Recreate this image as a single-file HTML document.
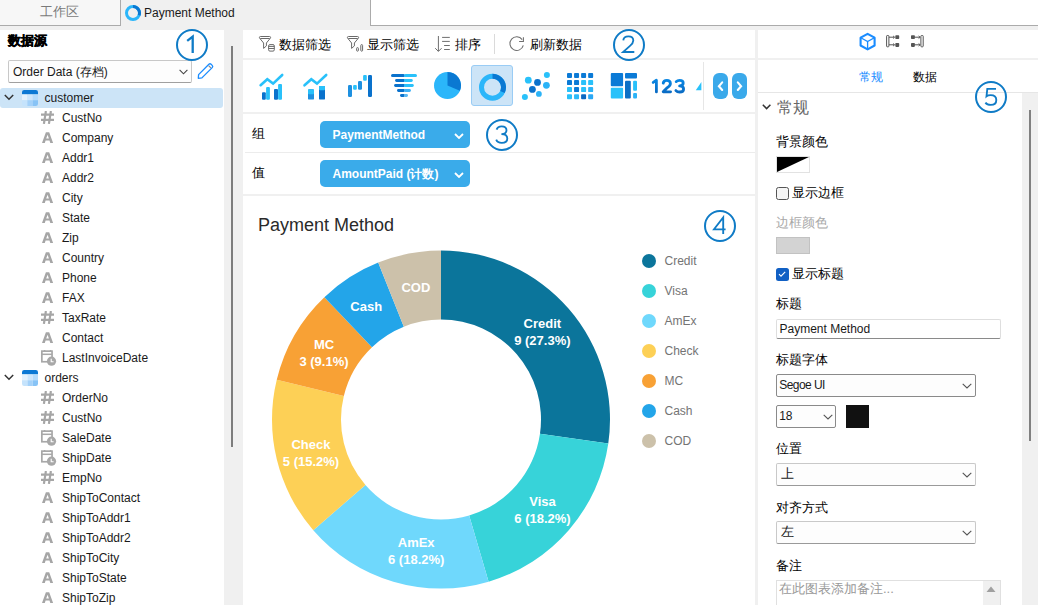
<!DOCTYPE html>
<html><head><meta charset="utf-8">
<style>
*{margin:0;padding:0;box-sizing:border-box}
html,body{width:1038px;height:605px;overflow:hidden;background:#f0f0f0;font-family:"Liberation Sans",sans-serif;color:#1a1a1a}
.abs{position:absolute}
.tt{position:absolute;font-size:12px;line-height:20px;height:20px;white-space:nowrap;color:#1a1a1a}
.ic{display:block}
.anno{position:absolute;width:32px;height:32px;border:1.8px solid #0f7bc6;border-radius:50%;color:#0f7bc6;font-size:22px;line-height:29px;text-align:center;z-index:10;font-family:"Liberation Sans",sans-serif}
.tb{position:absolute;font-size:13px;line-height:21px;white-space:nowrap;color:#000}
.nav{position:absolute;top:73px;width:15px;height:25.5px;background:#3aa9ea;border-radius:6px}
.pill{position:absolute;left:320px;width:150px;height:27px;background:#3aabea;border-radius:5px;color:#fff;font-weight:bold;font-size:12px;line-height:27px;padding-left:12.5px;padding-top:0.7px;white-space:nowrap}
.pill svg{position:absolute;left:133.5px;top:11.8px}
.dl{position:absolute;width:80px;text-align:center;color:#fff;font-weight:bold;font-size:13px;line-height:17px;white-space:nowrap}
.lg{position:absolute;font-size:12px;line-height:20px;color:#747474;white-space:nowrap}
.rl{position:absolute;left:776px;font-size:13px;line-height:18px;white-space:nowrap;color:#000}
.sel{position:absolute;left:776px;background:#fdfdfd;border:1px solid #c9c9c9;border-bottom-color:#9a9a9a;border-radius:2px;font-size:12px;white-space:nowrap;padding-left:3.5px}
.sel svg{position:absolute}
</style></head><body>
<!-- tab bar -->
<div class="abs" style="left:0;top:0;width:121px;height:26px;background:#f7f7f7;border-right:1px solid #ababab;border-bottom:1px solid #ababab"></div>
<div class="abs" style="left:40px;top:3px;font-size:13px;line-height:18px;color:#7a7a7a">工作区</div>
<svg class="abs" style="left:125px;top:5px" width="16" height="16" viewBox="0 0 16 16"><circle cx="8" cy="8" r="6.5" fill="none" stroke="#2bb6fa" stroke-width="3"/><path d="M8 0A8 8 0 0 1 15.52 10.74L12.7 9.71A5 5 0 0 0 8 3Z" fill="#0a78d2"/></svg>
<div class="abs" style="left:144px;top:3px;font-size:12px;line-height:20px;color:#1a1a1a">Payment Method</div>
<div class="abs" style="left:370px;top:0;width:668px;height:26px;background:#fff;border-left:1px solid #ababab;border-bottom:1px solid #ababab"></div>

<!-- left panel -->
<div class="abs" style="left:0;top:30px;width:224px;height:575px;background:#fff"></div>
<div class="abs" style="left:8px;top:32px;font-size:13px;font-weight:bold;line-height:18px;color:#000;-webkit-text-stroke:0.45px #000">数据源</div>
<div class="abs" style="left:8px;top:60px;width:183.5px;height:22.5px;background:#fdfdfd;border:1px solid #c8c8c8;border-bottom-color:#a0a0a0;border-radius:2px"></div>
<div class="abs" style="left:13px;top:62px;font-size:12px;line-height:20px;white-space:nowrap">Order Data (存档)</div>
<svg class="abs" style="left:178.5px;top:69px" width="9" height="6" viewBox="0 0 9 6"><path d="M0.6 0.8L4.5 4.8L8.4 0.8" stroke="#444" stroke-width="1.1" fill="none"/></svg>
<svg class="abs" style="left:196px;top:62px" width="19" height="19" viewBox="0 0 19 19"><path d="M2.6 12.6L12.9 2.3Q14 1.2 15.1 2.3L16.2 3.4Q17.3 4.5 16.2 5.6L5.9 15.9L2.3 16.3Z" stroke="#1a8cff" stroke-width="1.3" fill="none" stroke-linejoin="round"/><path d="M12.6 3.6L14.9 5.9" stroke="#888" stroke-width="1.2"/></svg>
<div style="position:absolute;left:0;top:88px;width:223px;height:20px;background:#cce4f7;border-radius:3px"></div>
<svg style="position:absolute;left:4px;top:94px" width="10" height="7" viewBox="0 0 10 7"><path d="M0.8 1L5 5.2L9.2 1" stroke="#333" stroke-width="1.5" fill="none"/></svg>
<div style="position:absolute;left:22px;top:90px;width:16px;height:16px"><svg width="16" height="16" viewBox="0 0 16 16"><defs><clipPath id="tc"><rect x="0" y="0" width="16" height="16" rx="2.2"/></clipPath></defs><g clip-path="url(#tc)"><rect x="0" y="0" width="16" height="4.4" fill="#0c78d4"/><rect x="0" y="4.4" width="5.4" height="5.8" fill="#e4f2fe"/><rect x="5.4" y="4.4" width="5.3" height="5.8" fill="#cde6fc"/><rect x="10.7" y="4.4" width="5.3" height="5.8" fill="#b5dbfb"/><rect x="0" y="10.2" width="5.4" height="5.8" fill="#c5e3fc"/><rect x="5.4" y="10.2" width="5.3" height="5.8" fill="#a3d1f9"/><rect x="10.7" y="10.2" width="5.3" height="5.8" fill="#87c3f6"/></g></svg></div>
<div class="tt" style="left:44.5px;top:88px">customer</div>
<div style="position:absolute;left:41px;top:111px"><svg class="ic" width="14" height="14" viewBox="0 0 14 14"><path d="M4.9 0L2.9 12.9M9.9 0L7.9 12.9M0 3.6H13M0 8.9H13" stroke="#a6a6a6" stroke-width="2.2" fill="none"/></svg></div>
<div class="tt" style="left:62px;top:108px">CustNo</div>
<div style="position:absolute;left:41px;top:131px"><svg class="ic" width="14" height="14" viewBox="0 0 14 14"><path fill-rule="evenodd" d="M1 12L4.9 1.2H8.2L12.1 12H9.3L8.5 9.6H4.6L3.8 12ZM5.2 7.6H7.9L6.55 3.8Z" fill="#a6a6a6"/></svg></div>
<div class="tt" style="left:62px;top:128px">Company</div>
<div style="position:absolute;left:41px;top:151px"><svg class="ic" width="14" height="14" viewBox="0 0 14 14"><path fill-rule="evenodd" d="M1 12L4.9 1.2H8.2L12.1 12H9.3L8.5 9.6H4.6L3.8 12ZM5.2 7.6H7.9L6.55 3.8Z" fill="#a6a6a6"/></svg></div>
<div class="tt" style="left:62px;top:148px">Addr1</div>
<div style="position:absolute;left:41px;top:171px"><svg class="ic" width="14" height="14" viewBox="0 0 14 14"><path fill-rule="evenodd" d="M1 12L4.9 1.2H8.2L12.1 12H9.3L8.5 9.6H4.6L3.8 12ZM5.2 7.6H7.9L6.55 3.8Z" fill="#a6a6a6"/></svg></div>
<div class="tt" style="left:62px;top:168px">Addr2</div>
<div style="position:absolute;left:41px;top:191px"><svg class="ic" width="14" height="14" viewBox="0 0 14 14"><path fill-rule="evenodd" d="M1 12L4.9 1.2H8.2L12.1 12H9.3L8.5 9.6H4.6L3.8 12ZM5.2 7.6H7.9L6.55 3.8Z" fill="#a6a6a6"/></svg></div>
<div class="tt" style="left:62px;top:188px">City</div>
<div style="position:absolute;left:41px;top:211px"><svg class="ic" width="14" height="14" viewBox="0 0 14 14"><path fill-rule="evenodd" d="M1 12L4.9 1.2H8.2L12.1 12H9.3L8.5 9.6H4.6L3.8 12ZM5.2 7.6H7.9L6.55 3.8Z" fill="#a6a6a6"/></svg></div>
<div class="tt" style="left:62px;top:208px">State</div>
<div style="position:absolute;left:41px;top:231px"><svg class="ic" width="14" height="14" viewBox="0 0 14 14"><path fill-rule="evenodd" d="M1 12L4.9 1.2H8.2L12.1 12H9.3L8.5 9.6H4.6L3.8 12ZM5.2 7.6H7.9L6.55 3.8Z" fill="#a6a6a6"/></svg></div>
<div class="tt" style="left:62px;top:228px">Zip</div>
<div style="position:absolute;left:41px;top:251px"><svg class="ic" width="14" height="14" viewBox="0 0 14 14"><path fill-rule="evenodd" d="M1 12L4.9 1.2H8.2L12.1 12H9.3L8.5 9.6H4.6L3.8 12ZM5.2 7.6H7.9L6.55 3.8Z" fill="#a6a6a6"/></svg></div>
<div class="tt" style="left:62px;top:248px">Country</div>
<div style="position:absolute;left:41px;top:271px"><svg class="ic" width="14" height="14" viewBox="0 0 14 14"><path fill-rule="evenodd" d="M1 12L4.9 1.2H8.2L12.1 12H9.3L8.5 9.6H4.6L3.8 12ZM5.2 7.6H7.9L6.55 3.8Z" fill="#a6a6a6"/></svg></div>
<div class="tt" style="left:62px;top:268px">Phone</div>
<div style="position:absolute;left:41px;top:291px"><svg class="ic" width="14" height="14" viewBox="0 0 14 14"><path fill-rule="evenodd" d="M1 12L4.9 1.2H8.2L12.1 12H9.3L8.5 9.6H4.6L3.8 12ZM5.2 7.6H7.9L6.55 3.8Z" fill="#a6a6a6"/></svg></div>
<div class="tt" style="left:62px;top:288px">FAX</div>
<div style="position:absolute;left:41px;top:311px"><svg class="ic" width="14" height="14" viewBox="0 0 14 14"><path d="M4.9 0L2.9 12.9M9.9 0L7.9 12.9M0 3.6H13M0 8.9H13" stroke="#a6a6a6" stroke-width="2.2" fill="none"/></svg></div>
<div class="tt" style="left:62px;top:308px">TaxRate</div>
<div style="position:absolute;left:41px;top:331px"><svg class="ic" width="14" height="14" viewBox="0 0 14 14"><path fill-rule="evenodd" d="M1 12L4.9 1.2H8.2L12.1 12H9.3L8.5 9.6H4.6L3.8 12ZM5.2 7.6H7.9L6.55 3.8Z" fill="#a6a6a6"/></svg></div>
<div class="tt" style="left:62px;top:328px">Contact</div>
<div style="position:absolute;left:41px;top:350px"><svg class="ic" width="16" height="16" viewBox="0 0 16 16"><rect x="0.85" y="1.15" width="10.2" height="10.6" stroke="#a8a8a8" stroke-width="1.7" fill="none"/><path d="M0.85 4.3H11" stroke="#a8a8a8" stroke-width="1.5"/><path d="M3.6 0V1.5M9.6 0V1.5" stroke="#a8a8a8" stroke-width="1.5"/><circle cx="10.5" cy="11.2" r="4.6" fill="#a8a8a8"/><path d="M10.2 8.7V11.7H12.6" stroke="#fff" stroke-width="1.1" fill="none"/></svg></div>
<div class="tt" style="left:62px;top:348px">LastInvoiceDate</div>
<svg style="position:absolute;left:4px;top:374px" width="10" height="7" viewBox="0 0 10 7"><path d="M0.8 1L5 5.2L9.2 1" stroke="#333" stroke-width="1.5" fill="none"/></svg>
<div style="position:absolute;left:22px;top:370px;width:16px;height:16px"><svg width="16" height="16" viewBox="0 0 16 16"><defs><clipPath id="tc"><rect x="0" y="0" width="16" height="16" rx="2.2"/></clipPath></defs><g clip-path="url(#tc)"><rect x="0" y="0" width="16" height="4.4" fill="#0c78d4"/><rect x="0" y="4.4" width="5.4" height="5.8" fill="#e4f2fe"/><rect x="5.4" y="4.4" width="5.3" height="5.8" fill="#cde6fc"/><rect x="10.7" y="4.4" width="5.3" height="5.8" fill="#b5dbfb"/><rect x="0" y="10.2" width="5.4" height="5.8" fill="#c5e3fc"/><rect x="5.4" y="10.2" width="5.3" height="5.8" fill="#a3d1f9"/><rect x="10.7" y="10.2" width="5.3" height="5.8" fill="#87c3f6"/></g></svg></div>
<div class="tt" style="left:44.5px;top:368px">orders</div>
<div style="position:absolute;left:41px;top:391px"><svg class="ic" width="14" height="14" viewBox="0 0 14 14"><path d="M4.9 0L2.9 12.9M9.9 0L7.9 12.9M0 3.6H13M0 8.9H13" stroke="#a6a6a6" stroke-width="2.2" fill="none"/></svg></div>
<div class="tt" style="left:62px;top:388px">OrderNo</div>
<div style="position:absolute;left:41px;top:411px"><svg class="ic" width="14" height="14" viewBox="0 0 14 14"><path d="M4.9 0L2.9 12.9M9.9 0L7.9 12.9M0 3.6H13M0 8.9H13" stroke="#a6a6a6" stroke-width="2.2" fill="none"/></svg></div>
<div class="tt" style="left:62px;top:408px">CustNo</div>
<div style="position:absolute;left:41px;top:430px"><svg class="ic" width="16" height="16" viewBox="0 0 16 16"><rect x="0.85" y="1.15" width="10.2" height="10.6" stroke="#a8a8a8" stroke-width="1.7" fill="none"/><path d="M0.85 4.3H11" stroke="#a8a8a8" stroke-width="1.5"/><path d="M3.6 0V1.5M9.6 0V1.5" stroke="#a8a8a8" stroke-width="1.5"/><circle cx="10.5" cy="11.2" r="4.6" fill="#a8a8a8"/><path d="M10.2 8.7V11.7H12.6" stroke="#fff" stroke-width="1.1" fill="none"/></svg></div>
<div class="tt" style="left:62px;top:428px">SaleDate</div>
<div style="position:absolute;left:41px;top:450px"><svg class="ic" width="16" height="16" viewBox="0 0 16 16"><rect x="0.85" y="1.15" width="10.2" height="10.6" stroke="#a8a8a8" stroke-width="1.7" fill="none"/><path d="M0.85 4.3H11" stroke="#a8a8a8" stroke-width="1.5"/><path d="M3.6 0V1.5M9.6 0V1.5" stroke="#a8a8a8" stroke-width="1.5"/><circle cx="10.5" cy="11.2" r="4.6" fill="#a8a8a8"/><path d="M10.2 8.7V11.7H12.6" stroke="#fff" stroke-width="1.1" fill="none"/></svg></div>
<div class="tt" style="left:62px;top:448px">ShipDate</div>
<div style="position:absolute;left:41px;top:471px"><svg class="ic" width="14" height="14" viewBox="0 0 14 14"><path d="M4.9 0L2.9 12.9M9.9 0L7.9 12.9M0 3.6H13M0 8.9H13" stroke="#a6a6a6" stroke-width="2.2" fill="none"/></svg></div>
<div class="tt" style="left:62px;top:468px">EmpNo</div>
<div style="position:absolute;left:41px;top:491px"><svg class="ic" width="14" height="14" viewBox="0 0 14 14"><path fill-rule="evenodd" d="M1 12L4.9 1.2H8.2L12.1 12H9.3L8.5 9.6H4.6L3.8 12ZM5.2 7.6H7.9L6.55 3.8Z" fill="#a6a6a6"/></svg></div>
<div class="tt" style="left:62px;top:488px">ShipToContact</div>
<div style="position:absolute;left:41px;top:511px"><svg class="ic" width="14" height="14" viewBox="0 0 14 14"><path fill-rule="evenodd" d="M1 12L4.9 1.2H8.2L12.1 12H9.3L8.5 9.6H4.6L3.8 12ZM5.2 7.6H7.9L6.55 3.8Z" fill="#a6a6a6"/></svg></div>
<div class="tt" style="left:62px;top:508px">ShipToAddr1</div>
<div style="position:absolute;left:41px;top:531px"><svg class="ic" width="14" height="14" viewBox="0 0 14 14"><path fill-rule="evenodd" d="M1 12L4.9 1.2H8.2L12.1 12H9.3L8.5 9.6H4.6L3.8 12ZM5.2 7.6H7.9L6.55 3.8Z" fill="#a6a6a6"/></svg></div>
<div class="tt" style="left:62px;top:528px">ShipToAddr2</div>
<div style="position:absolute;left:41px;top:551px"><svg class="ic" width="14" height="14" viewBox="0 0 14 14"><path fill-rule="evenodd" d="M1 12L4.9 1.2H8.2L12.1 12H9.3L8.5 9.6H4.6L3.8 12ZM5.2 7.6H7.9L6.55 3.8Z" fill="#a6a6a6"/></svg></div>
<div class="tt" style="left:62px;top:548px">ShipToCity</div>
<div style="position:absolute;left:41px;top:571px"><svg class="ic" width="14" height="14" viewBox="0 0 14 14"><path fill-rule="evenodd" d="M1 12L4.9 1.2H8.2L12.1 12H9.3L8.5 9.6H4.6L3.8 12ZM5.2 7.6H7.9L6.55 3.8Z" fill="#a6a6a6"/></svg></div>
<div class="tt" style="left:62px;top:568px">ShipToState</div>
<div style="position:absolute;left:41px;top:591px"><svg class="ic" width="14" height="14" viewBox="0 0 14 14"><path fill-rule="evenodd" d="M1 12L4.9 1.2H8.2L12.1 12H9.3L8.5 9.6H4.6L3.8 12ZM5.2 7.6H7.9L6.55 3.8Z" fill="#a6a6a6"/></svg></div>
<div class="tt" style="left:62px;top:588px">ShipToZip</div>
<div class="abs" style="left:231px;top:46px;width:2px;height:401px;background:#7d7d7d"></div>

<!-- middle panel -->
<div class="abs" style="left:243px;top:30px;width:512px;height:27.5px;background:#fff"></div>
<svg class="abs" style="left:255px;top:32px" width="25" height="24" viewBox="0 0 25 24"><path d="M5.4 4.5H14.6A1 1 0 0 1 14.6 6.5H5.4A1 1 0 0 1 5.4 4.5Z" stroke="#6a6a6a" stroke-width="1" fill="none"/><path d="M5 6.6L8.6 11V16.4L11.4 13.9V11L15 6.6" stroke="#6a6a6a" stroke-width="1" fill="none" stroke-linejoin="round"/><rect x="13.6" y="12.6" width="5.7" height="6.5" rx="1.3" stroke="#6a6a6a" stroke-width="1" fill="#fff"/><path d="M13.6 14.4H19.3M13.6 16.5H19.3" stroke="#6a6a6a" stroke-width="1"/></svg>
<div class="tb" style="left:278.5px;top:34px">数据筛选</div>
<svg class="abs" style="left:343px;top:32px" width="25" height="24" viewBox="0 0 25 24"><path d="M5.4 4.5H14.6A1 1 0 0 1 14.6 6.5H5.4A1 1 0 0 1 5.4 4.5Z" stroke="#6a6a6a" stroke-width="1" fill="none"/><path d="M5 6.6L8.6 11V16.4L11.4 13.9V11L15 6.6" stroke="#6a6a6a" stroke-width="1" fill="none" stroke-linejoin="round"/><rect x="13.6" y="15.6" width="1.8" height="3.6" rx="0.9" stroke="#6a6a6a" stroke-width="1" fill="none"/><rect x="17.8" y="12.6" width="1.8" height="6.6" rx="0.9" stroke="#6a6a6a" stroke-width="1" fill="none"/></svg>
<div class="tb" style="left:366.5px;top:34px">显示筛选</div>
<svg class="abs" style="left:430px;top:32px" width="25" height="24" viewBox="0 0 25 24"><path d="M8.4 4V19.2M5.2 16.2L8.4 19.4L11.6 16.2" stroke="#6e6e6e" stroke-width="1" fill="none"/><path d="M12.1 5.4H19.8M12.1 9.4H19.8M14.1 13.5H19.8M14.1 17.5H19.8" stroke="#6e6e6e" stroke-width="1"/></svg>
<div class="tb" style="left:454.5px;top:34px">排序</div>
<div class="abs" style="left:494px;top:34px;width:1px;height:20px;background:#dadada"></div>
<svg class="abs" style="left:505px;top:32px" width="25" height="24" viewBox="0 0 25 24"><path d="M17.2 7.6A6.8 6.8 0 1 0 18.3 13.4" stroke="#6e6e6e" stroke-width="1.05" fill="none"/><path d="M18.4 5.2V9.4H14.1" stroke="#6e6e6e" stroke-width="1.05" fill="none"/></svg>
<div class="tb" style="left:529.5px;top:34px">刷新数据</div>

<div class="abs" style="left:243px;top:60px;width:512px;height:52px;background:#fff"></div>

<svg style="position:absolute;left:255px;top:68px" width="32" height="36" viewBox="255 68 32 36">
<polyline points="260.6,85.2 267.3,79.2 273.1,83.6 282.2,75" stroke="#29c1fa" stroke-width="2.6" fill="none" stroke-linecap="round" stroke-linejoin="miter"/>
<rect x="262" y="92.2" width="3.8" height="7.5" rx="1" fill="#0a72cc"/>
<rect x="266.1" y="87" width="3.8" height="12.7" rx="1" fill="#29c1fa"/>
<rect x="274" y="89.1" width="4" height="10.6" rx="1" fill="#0a72cc"/>
<rect x="278.1" y="84" width="3.9" height="15.7" rx="1" fill="#29c1fa"/>
</svg>
<svg style="position:absolute;left:300px;top:68px" width="32" height="36" viewBox="300 68 32 36">
<polyline points="304.5,85.3 311.3,79.2 317,83.6 326.2,75" stroke="#29c1fa" stroke-width="2.6" fill="none" stroke-linecap="round"/>
<rect x="308" y="89.2" width="6" height="10.4" rx="1.2" fill="#1e90e0"/>
<rect x="308" y="89.2" width="6" height="5" rx="1" fill="#29c1fa"/>
<rect x="319" y="86.1" width="6" height="13.5" rx="1.2" fill="#0a72cc"/>
<rect x="319" y="86.1" width="6" height="4.1" rx="1" fill="#29c1fa"/>
</svg>
<svg style="position:absolute;left:345px;top:68px" width="30" height="34" viewBox="345 68 30 34">
<rect x="348" y="85" width="4" height="12" rx="1.2" fill="#1e90e0"/>
<rect x="353.1" y="85.1" width="3.7" height="4.7" rx="1" fill="#29c1fa"/>
<rect x="358" y="81.1" width="4" height="8.7" rx="1.2" fill="#1e90e0"/>
<rect x="363.1" y="75.1" width="3.7" height="5.6" rx="1" fill="#29c1fa"/>
<rect x="368" y="75.1" width="4" height="21.8" rx="1.2" fill="#0a72cc"/>
</svg>
<svg style="position:absolute;left:388px;top:68px" width="32" height="34" viewBox="388 68 32 34">
<rect x="391" y="74" width="14" height="3" rx="1.5" fill="#0a72cc"/><rect x="404" y="74" width="13" height="3" rx="1.5" fill="#29c1fa"/>
<rect x="395.1" y="79.1" width="10" height="2.9" rx="1.4" fill="#0a72cc"/><rect x="404" y="79.1" width="8.8" height="2.9" rx="1.4" fill="#29c1fa"/>
<rect x="394.1" y="84" width="11" height="2.9" rx="1.4" fill="#0a72cc"/><rect x="404" y="84" width="9.8" height="2.9" rx="1.4" fill="#29c1fa"/>
<rect x="397" y="89" width="8" height="2.9" rx="1.4" fill="#0a72cc"/><rect x="404" y="89" width="6.9" height="2.9" rx="1.4" fill="#3bb0f5"/>
<rect x="400" y="94" width="5" height="2.9" rx="1.4" fill="#0a72cc"/><rect x="404" y="94" width="4" height="2.9" rx="1.4" fill="#5ab9f3"/>
</svg>
<svg style="position:absolute;left:430px;top:68px" width="36" height="36" viewBox="430 68 36 36">
<circle cx="447.5" cy="85.5" r="13.5" fill="#2bb6fa"/>
<path d="M447.5,85.5 L447.5,72 A13.5,13.5 0 0 1 459.9,90.8 Z" fill="#0a78d2"/>
</svg>
<div style="position:absolute;left:471px;top:65px;width:42px;height:41px;background:#cce4f7;border:1px solid #99ccf5;border-radius:3px"></div>
<svg style="position:absolute;left:476px;top:70px" width="34" height="34" viewBox="476 70 34 34">
<circle cx="492.5" cy="87.3" r="11" fill="none" stroke="#2bb6fa" stroke-width="5"/>
<path d="M492.5,73.8 A13.5,13.5 0 0 1 504.7,93.1 L500.2,91 A8.5,8.5 0 0 0 492.5,78.8 Z" fill="#0a78d2"/>
</svg>
<svg style="position:absolute;left:518px;top:68px" width="36" height="36" viewBox="518 68 36 36">
<circle cx="528.3" cy="80.2" r="3.4" fill="#29c1fa"/>
<circle cx="537.5" cy="82.4" r="3.4" fill="#0a72cc"/>
<circle cx="546.9" cy="74.9" r="3" fill="#29c1fa"/>
<circle cx="546.4" cy="85.3" r="3.4" fill="#2bb3f7"/>
<circle cx="532.4" cy="89.4" r="3.4" fill="#0a72cc"/>
<circle cx="538.9" cy="93.9" r="2.9" fill="#2bb3f7"/>
<circle cx="524.9" cy="96.9" r="3" fill="#29c1fa"/>
</svg>
<svg style="position:absolute;left:564px;top:70px" width="32" height="32" viewBox="564 70 32 32"><rect x="567.00" y="73.00" width="5" height="5" rx="0.9" fill="#0b7ad6"/><rect x="574.05" y="73.00" width="5" height="5" rx="0.9" fill="#0b7ad6"/><rect x="581.10" y="73.00" width="5" height="5" rx="0.9" fill="#0b7ad6"/><rect x="588.15" y="73.00" width="5" height="5" rx="0.9" fill="#0b7ad6"/><rect x="567.00" y="80.05" width="5" height="5" rx="0.9" fill="#0b7ad6"/><rect x="574.05" y="80.05" width="5" height="5" rx="0.9" fill="#0b7ad6"/><rect x="581.10" y="80.05" width="5" height="5" rx="0.9" fill="#29c1fa"/><rect x="588.15" y="80.05" width="5" height="5" rx="0.9" fill="#29c1fa"/><rect x="567.00" y="87.10" width="5" height="5" rx="0.9" fill="#29c1fa"/><rect x="574.05" y="87.10" width="5" height="5" rx="0.9" fill="#0b7ad6"/><rect x="581.10" y="87.10" width="5" height="5" rx="0.9" fill="#29c1fa"/><rect x="588.15" y="87.10" width="5" height="5" rx="0.9" fill="#2bb3f7"/><rect x="567.00" y="94.15" width="5" height="5" rx="0.9" fill="#29c1fa"/><rect x="574.05" y="94.15" width="5" height="5" rx="0.9" fill="#2bbaf9"/><rect x="581.10" y="94.15" width="5" height="5" rx="0.9" fill="#0a68c2"/><rect x="588.15" y="94.15" width="5" height="5" rx="0.9" fill="#2aa8f5"/></svg>
<svg style="position:absolute;left:608px;top:70px" width="32" height="32" viewBox="608 70 32 32">
<rect x="610.8" y="73.1" width="12.3" height="13.1" rx="1" fill="#0b7ad6"/>
<rect x="625" y="73.1" width="12" height="5.4" rx="1" fill="#0b7ad6"/>
<rect x="610.8" y="87.7" width="12.3" height="10.8" rx="1" fill="#29c1fa"/>
<rect x="625" y="80.8" width="5.8" height="17.7" rx="1" fill="#0a6fc6"/>
<rect x="633.1" y="80.8" width="3.9" height="10" rx="1" fill="#29c1fa"/>
<rect x="633.1" y="93.1" width="3.9" height="5.4" rx="1" fill="#2bb3f7"/>
</svg>
<svg style="position:absolute;left:648px;top:75px" width="40" height="22" viewBox="648 75 40 22"><defs><linearGradient id="g123" x1="0" y1="0" x2="0" y2="1"><stop offset="0" stop-color="#0a86e2"/><stop offset="1" stop-color="#0a6cc5"/></linearGradient></defs><g stroke="url(#g123)" stroke-width="2.8" fill="none" stroke-linecap="round" stroke-linejoin="round"><path d="M653.2 82.4L656.4 80.2V91.9"/><path d="M663.2 83.2Q663.6 80.3 666.8 80.3Q670.4 80.3 670.4 83.4Q670.4 85.6 667.4 87.6L663.2 91.8H670.6"/><path d="M676.2 81.6Q677.4 80.3 679.6 80.3Q683.2 80.3 683.2 83Q683.2 85.8 679.6 85.9Q683.6 86 683.6 88.9Q683.6 92 679.6 92Q677.2 92 675.9 90.6"/></g></svg>
<svg style="position:absolute;left:694px;top:80px" width="10" height="12" viewBox="694 80 10 12"><path d="M695.8 90.2L701.4 82V90.2Z" fill="#29c1fa"/></svg>
<div style="position:absolute;left:703px;top:62px;width:1px;height:48px;background:#e6e6e6"></div>
<div class="nav" style="left:713px"><svg width="15" height="25" viewBox="0 0 15 25"><path d="M9.2 9.4L5.9 13.2L9.2 17" stroke="#fff" stroke-width="2.1" fill="none" stroke-linecap="round"/></svg></div>
<div class="nav" style="left:732px"><svg width="15" height="25" viewBox="0 0 15 25"><path d="M5.8 9.4L9.1 13.2L5.8 17" stroke="#fff" stroke-width="2.1" fill="none" stroke-linecap="round"/></svg></div>

<div class="abs" style="left:243px;top:114px;width:512px;height:79.5px;background:#fff"></div>
<div class="abs" style="left:245px;top:152px;width:510px;height:1px;background:#ececec"></div>
<div class="abs" style="left:252px;top:125px;font-size:13px;line-height:18px;color:#000">组</div>
<div class="abs" style="left:252px;top:164px;font-size:13px;line-height:18px;color:#000">值</div>
<div class="pill" style="top:121px">PaymentMethod<svg width="10" height="6" viewBox="0 0 10 6"><path d="M1 1L5 5L9 1" stroke="#fff" stroke-width="1.8" fill="none"/></svg></div>
<div class="pill" style="top:160px">AmountPaid (计数)<svg width="10" height="6" viewBox="0 0 10 6"><path d="M1 1L5 5L9 1" stroke="#fff" stroke-width="1.8" fill="none"/></svg></div>

<div class="abs" style="left:243px;top:196px;width:512px;height:409px;background:#fff"></div>
<div class="abs" style="left:258px;top:213px;font-size:18px;line-height:24px;color:#2a2a2a;white-space:nowrap">Payment Method</div>
<svg class="abs" style="left:0;top:0" width="1038" height="605" viewBox="0 0 1038 605">
<path d="M441.00,250.50A169,169 0 0 1 608.28,443.55L539.98,433.73A100,100 0 0 0 441.00,319.50Z" fill="#0b759b"/>
<path d="M608.28,443.55A169,169 0 0 1 488.61,581.65L469.17,515.45A100,100 0 0 0 539.98,433.73Z" fill="#37d3d9"/>
<path d="M488.61,581.65A169,169 0 0 1 313.28,530.17L365.43,484.99A100,100 0 0 0 469.17,515.45Z" fill="#6fd8fc"/>
<path d="M313.28,530.17A169,169 0 0 1 276.76,379.66L343.82,395.92A100,100 0 0 0 365.43,484.99Z" fill="#fdd056"/>
<path d="M276.76,379.66A169,169 0 0 1 324.38,297.19L371.99,347.13A100,100 0 0 0 343.82,395.92Z" fill="#f8a135"/>
<path d="M324.38,297.19A169,169 0 0 1 378.19,262.61L403.83,326.66A100,100 0 0 0 371.99,347.13Z" fill="#23a5e9"/>
<path d="M378.19,262.61A169,169 0 0 1 441.00,250.50L441.00,319.50A100,100 0 0 0 403.83,326.66Z" fill="#ccc1aa"/>
</svg>
<div class="dl" style="left:502.4px;top:315.0px">Credit<br>9 (27.3%)</div><div class="dl" style="left:502.5px;top:493.3px">Visa<br>6 (18.2%)</div><div class="dl" style="left:376.2px;top:533.8px">AmEx<br>6 (18.2%)</div><div class="dl" style="left:271.0px;top:435.7px">Check<br>5 (15.2%)</div><div class="dl" style="left:284.0px;top:336.0px">MC<br>3 (9.1%)</div><div class="dl" style="left:326.2px;top:298.0px">Cash</div><div class="dl" style="left:375.9px;top:278.7px">COD</div>
<div style="position:absolute;left:642px;top:253.8px;width:14px;height:14px;border-radius:50%;background:#0b759b"></div><div class="lg" style="left:664.5px;top:250.8px">Credit</div><div style="position:absolute;left:642px;top:283.8px;width:14px;height:14px;border-radius:50%;background:#37d3d9"></div><div class="lg" style="left:664.5px;top:280.8px">Visa</div><div style="position:absolute;left:642px;top:313.8px;width:14px;height:14px;border-radius:50%;background:#6fd8fc"></div><div class="lg" style="left:664.5px;top:310.8px">AmEx</div><div style="position:absolute;left:642px;top:343.8px;width:14px;height:14px;border-radius:50%;background:#fdd056"></div><div class="lg" style="left:664.5px;top:340.8px">Check</div><div style="position:absolute;left:642px;top:373.8px;width:14px;height:14px;border-radius:50%;background:#f8a135"></div><div class="lg" style="left:664.5px;top:370.8px">MC</div><div style="position:absolute;left:642px;top:403.8px;width:14px;height:14px;border-radius:50%;background:#23a5e9"></div><div class="lg" style="left:664.5px;top:400.8px">Cash</div><div style="position:absolute;left:642px;top:433.8px;width:14px;height:14px;border-radius:50%;background:#ccc1aa"></div><div class="lg" style="left:664.5px;top:430.8px">COD</div>

<!-- right panel -->
<div class="abs" style="left:757.5px;top:30px;width:281px;height:28px;background:#fff"></div>
<div class="abs" style="left:757.5px;top:60px;width:281px;height:545px;background:#fff"></div>
<div class="abs" style="left:757.5px;top:92px;width:281px;height:1px;background:#e6e6e6"></div>
<svg class="abs" style="left:858px;top:32px" width="19" height="19" viewBox="0 0 19 19"><path d="M9.6 1.8L16.6 5.7V13.5L9.6 17.4L2.6 13.5V5.7Z" stroke="#1a8cff" stroke-width="2.1" fill="none" stroke-linejoin="round"/><path d="M2.8 5.8L9.6 9.6L16.4 5.8M9.6 9.6V17.2" stroke="#1a8cff" stroke-width="1.3" fill="none"/></svg>
<svg class="abs" style="left:885px;top:34px" width="16" height="15" viewBox="0 0 16 15"><rect x="1.6" y="1.5" width="2.3" height="11.3" rx="0.7" stroke="#555" stroke-width="1" fill="none"/><path d="M4 3.2H9.3M4 10.8H9.3" stroke="#555" stroke-width="1"/><path d="M8 1.9L9.6 3.2L8 4.5M8 9.5L9.6 10.8L8 12.1" stroke="#555" stroke-width="0.9" fill="none"/><rect x="10.3" y="1.2" width="3.9" height="3.9" rx="0.8" fill="#555"/><rect x="10.3" y="9" width="3.9" height="3.9" rx="0.8" fill="#555"/></svg>
<svg class="abs" style="left:910px;top:34px" width="16" height="15" viewBox="0 0 16 15"><rect x="1" y="1.2" width="3.9" height="3.9" rx="0.8" fill="#555"/><rect x="1" y="9" width="3.9" height="3.9" rx="0.8" fill="#555"/><path d="M4.5 3.2H10M4.5 10.8H10" stroke="#555" stroke-width="1"/><path d="M8.6 1.9L10.2 3.2L8.6 4.5M8.6 9.5L10.2 10.8L8.6 12.1" stroke="#555" stroke-width="0.9" fill="none"/><rect x="10.9" y="1.5" width="2.3" height="11.3" rx="0.7" stroke="#555" stroke-width="1" fill="none"/></svg>
<div class="abs" style="left:858.5px;top:69px;font-size:12px;line-height:17px;color:#1a8cff">常规</div>
<div class="abs" style="left:912.5px;top:69px;font-size:12px;line-height:17px;color:#000">数据</div>
<div class="abs" style="left:1022px;top:93px;width:16px;height:512px;background:#f0f0f0"></div>
<div class="abs" style="left:1029px;top:110px;width:2px;height:331px;background:#808080"></div>
<svg class="abs" style="left:762px;top:104px" width="10" height="6" viewBox="0 0 10 6"><path d="M0.8 0.8L4.6 4.6L8.4 0.8" stroke="#333" stroke-width="1.5" fill="none"/></svg>
<div class="abs" style="left:776.5px;top:96.5px;font-size:15.5px;line-height:21px;color:#666">常规</div>
<div class="rl" style="top:133px">背景颜色</div>
<svg class="abs" style="left:776px;top:156px" width="34" height="17" viewBox="0 0 34 17"><rect x="0.5" y="0.5" width="33" height="16" fill="#fff" stroke="#e2e2e2"/><path d="M1 1H33L1 16Z" fill="#000"/></svg>
<div class="abs" style="left:776px;top:187px;width:12.5px;height:12.5px;border:1px solid #555;border-radius:2.5px;background:#f5f5f5"></div>
<div class="rl" style="left:791.8px;top:184px">显示边框</div>
<div class="rl" style="top:214px;color:#a8a8a8">边框颜色</div>
<div class="abs" style="left:776px;top:237px;width:34px;height:16.5px;background:#d3d3d3;border:1px solid #c2c2c2"></div>
<div class="abs" style="left:776px;top:268px;width:12.5px;height:12.5px;border-radius:2.5px;background:#1160c4"><svg width="12" height="12" viewBox="0 0 12 12" style="position:absolute;left:0;top:0"><path d="M3 6.2L5 8.2L9.2 3.8" stroke="#fff" stroke-width="1.1" fill="none"/></svg></div>
<div class="rl" style="left:791.8px;top:265px">显示标题</div>
<div class="rl" style="top:295px">标题</div>
<div class="abs" style="left:776px;top:318.5px;width:224.5px;height:20px;background:#fff;border:1px solid #dedede;border-bottom-color:#8a8a8a;border-radius:2px"></div>
<div class="abs" style="left:779.5px;top:318.5px;font-size:12px;line-height:20px;white-space:nowrap">Payment Method</div>
<div class="rl" style="top:351px">标题字体</div>
<div class="sel" style="top:374px;width:199.5px;height:22.5px;line-height:20.5px;border-color:#8a8a8a;letter-spacing:-0.55px;padding-left:2.2px">Segoe UI<svg style="left:185px;top:8px" width="10" height="6" viewBox="0 0 10 6"><path d="M0.7 0.8L5 5L9.3 0.8" stroke="#555" stroke-width="1.1" fill="none"/></svg></div>
<div class="sel" style="top:405px;width:59.5px;height:22.5px;line-height:20.5px;border-color:#8a8a8a;padding-left:2.2px">18<svg style="left:46px;top:8px" width="10" height="6" viewBox="0 0 10 6"><path d="M0.7 0.8L5 5L9.3 0.8" stroke="#555" stroke-width="1.1" fill="none"/></svg></div>
<div class="abs" style="left:846px;top:405px;width:23px;height:22.5px;background:#111"></div>
<div class="rl" style="top:440px">位置</div>
<div class="sel" style="top:463px;width:199.5px;height:22.5px;line-height:20.5px;font-size:13px">上<svg style="left:185px;top:8px" width="10" height="6" viewBox="0 0 10 6"><path d="M0.7 0.8L5 5L9.3 0.8" stroke="#555" stroke-width="1.1" fill="none"/></svg></div>
<div class="rl" style="top:498.5px">对齐方式</div>
<div class="sel" style="top:521px;width:199.5px;height:22.5px;line-height:20.5px;font-size:13px">左<svg style="left:185px;top:8px" width="10" height="6" viewBox="0 0 10 6"><path d="M0.7 0.8L5 5L9.3 0.8" stroke="#555" stroke-width="1.1" fill="none"/></svg></div>
<div class="rl" style="top:556.5px">备注</div>
<div class="abs" style="left:776px;top:579.5px;width:224.5px;height:40px;background:#fff;border:1px solid #e0e0e0"></div>
<div class="abs" style="left:779px;top:580px;font-size:13px;line-height:18px;color:#999;white-space:nowrap">在此图表添加备注...</div>
<div class="abs" style="left:982.5px;top:580.5px;width:17px;height:30px;background:#f0f0f0"></div>
<svg class="abs" style="left:985px;top:585px" width="12" height="8" viewBox="0 0 12 8"><path d="M1.5 7L6 1.5L10.5 7Z" fill="#a0a0a0"/></svg>

<!-- annotations -->
<svg class="abs" style="left:175px;top:27.799999999999997px;z-index:10" width="34" height="34" viewBox="0 0 34 34"><circle cx="17" cy="17" r="15" fill="none" stroke="#0f7bc6" stroke-width="2"/><path d="M12.2 12.8L17.7 8.6V25.1" fill="none" stroke="#0f7bc6" stroke-width="2.3" stroke-linejoin="miter"/></svg>
<svg class="abs" style="left:612px;top:27.9px;z-index:10" width="34" height="34" viewBox="0 0 34 34"><circle cx="17" cy="17" r="15" fill="none" stroke="#0f7bc6" stroke-width="2"/><path d="M11.3 12.4Q11.6 8.4 16.4 8.4Q21.3 8.4 21.3 12.6Q21.3 15.2 18 17.9L11.1 24H22.3" fill="none" stroke="#0f7bc6" stroke-width="1.85" stroke-linejoin="miter"/></svg>
<svg class="abs" style="left:485px;top:118px;z-index:10" width="34" height="34" viewBox="0 0 34 34"><circle cx="17" cy="17" r="15" fill="none" stroke="#0f7bc6" stroke-width="2"/><path d="M11.6 11.6Q12.6 8.4 16.6 8.4Q21.5 8.4 21.5 12.3Q21.5 16.1 16.4 16.1Q22.3 16.1 22.3 20.5Q22.3 24.8 16.8 24.8Q12.4 24.8 11.2 21.6" fill="none" stroke="#0f7bc6" stroke-width="1.85" stroke-linejoin="miter"/></svg>
<svg class="abs" style="left:703px;top:208.9px;z-index:10" width="34" height="34" viewBox="0 0 34 34"><circle cx="17" cy="17" r="15" fill="none" stroke="#0f7bc6" stroke-width="2"/><path d="M20.2 25V8.4L11 20.3H22.6" fill="none" stroke="#0f7bc6" stroke-width="1.85" stroke-linejoin="miter"/></svg>
<svg class="abs" style="left:973.8px;top:80px;z-index:10" width="34" height="34" viewBox="0 0 34 34"><circle cx="17" cy="17" r="15" fill="none" stroke="#0f7bc6" stroke-width="2"/><path d="M22 8.9H13.3L12.5 16.3Q14 15.1 16.6 15.1Q22.3 15.1 22.3 19.9Q22.3 24.9 16.8 24.9Q13.1 24.9 11.4 22.6" fill="none" stroke="#0f7bc6" stroke-width="1.85" stroke-linejoin="miter"/></svg>
</body></html>
